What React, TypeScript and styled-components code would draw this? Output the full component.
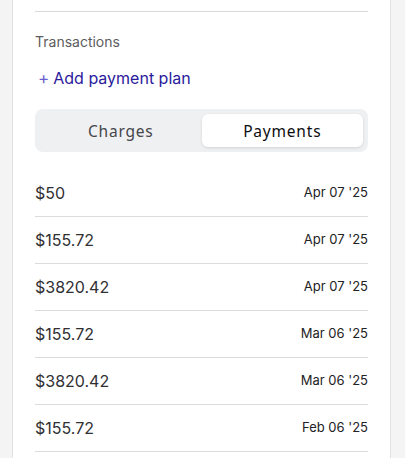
import { FunctionComponent, useState } from "react";
import styled, { createGlobalStyle } from "styled-components";

const GlobalStyle = createGlobalStyle`
  html, body {
    margin: 0;
    padding: 0;
    background: #f4f4f5;
  }
  body {
    font-family: Inter, "Liberation Sans", Arial, sans-serif;
    -webkit-font-smoothing: antialiased;
  }
`;

type Transaction = {
  amount: string;
  date: string;
};

// 결제 내역
const payments: Transaction[] = [
  { amount: "$50", date: "Apr 07 '25" },
  { amount: "$155.72", date: "Apr 07 '25" },
  { amount: "$3820.42", date: "Apr 07 '25" },
  { amount: "$155.72", date: "Mar 06 '25" },
  { amount: "$3820.42", date: "Mar 06 '25" },
  { amount: "$155.72", date: "Feb 06 '25" },
];

const App: FunctionComponent = () => {
  const [tab, setTab] = useState<"charges" | "payments">("payments");

  return (
    <Page>
      <GlobalStyle />
      <Card>
        <Section>
          <Label>Transactions</Label>
          <AddLink type="button">
            <Plus>+</Plus>
            Add payment plan
          </AddLink>

          <Segmented>
            <SegmentButton
              $active={tab === "charges"}
              onClick={() => setTab("charges")}
            >
              Charges
            </SegmentButton>
            <SegmentButton
              $active={tab === "payments"}
              onClick={() => setTab("payments")}
            >
              Payments
            </SegmentButton>
          </Segmented>

          <List>
            {payments.map((item, i) => (
              <Row key={i}>
                <Amount>{item.amount}</Amount>
                <DateText>{item.date}</DateText>
              </Row>
            ))}
          </List>
        </Section>
      </Card>
    </Page>
  );
};

export default App;

const Page = styled.div`
  padding: 0 14px 0 12px;
  min-height: 458px;
`;

const Card = styled.div`
  background: #ffffff;
  border-left: 1px solid #e2e2e4;
  border-right: 1px solid #e2e2e4;
  padding: 11px 22px 0;
  min-height: 447px;
`;

const Section = styled.div`
  border-top: 1px solid #d9d9dc;
  padding-top: 20px;
`;

const Label = styled.div`
  font-size: 14px;
  line-height: 20px;
  color: #5c5c60;
`;

const AddLink = styled.button`
  display: flex;
  align-items: center;
  gap: 4px;
  margin-top: 15px;
  padding: 0 0 0 3px;
  border: none;
  background: none;
  font-family: inherit;
  font-size: 16px;
  line-height: 22px;
  color: #2b1a9c;
  cursor: pointer;
`;

const Plus = styled.span`
  color: #6b5fd0;
  font-size: 17px;
`;

const Segmented = styled.div`
  display: grid;
  grid-template-columns: 1fr 1fr;
  margin-top: 20px;
  padding: 5px;
  background: #eff0f2;
  border-radius: 8px;
`;

const SegmentButton = styled.button<{ $active: boolean }>`
  height: 33px;
  border: none;
  border-radius: 6px;
  background: ${(p) => (p.$active ? "#ffffff" : "transparent")};
  box-shadow: ${(p) => (p.$active ? "0 1px 3px rgba(0, 0, 0, 0.12)" : "none")};
  font-family: "Noto Sans", Inter, sans-serif;
  font-size: 15.5px;
  font-weight: 400;
  letter-spacing: 0.8px;
  color: ${(p) => (p.$active ? "#0d0d0f" : "#46464b")};
  cursor: pointer;
`;

const List = styled.div`
  margin-top: 18px;
`;

const Row = styled.div`
  display: flex;
  justify-content: space-between;
  align-items: center;
  height: 46px;
  border-bottom: 1px solid #dcdcde;
`;

const Amount = styled.span`
  font-size: 16px;
  color: #303033;
`;

const DateText = styled.span`
  font-size: 13px;
  color: #222224;
  margin-top: -2px;
`;
